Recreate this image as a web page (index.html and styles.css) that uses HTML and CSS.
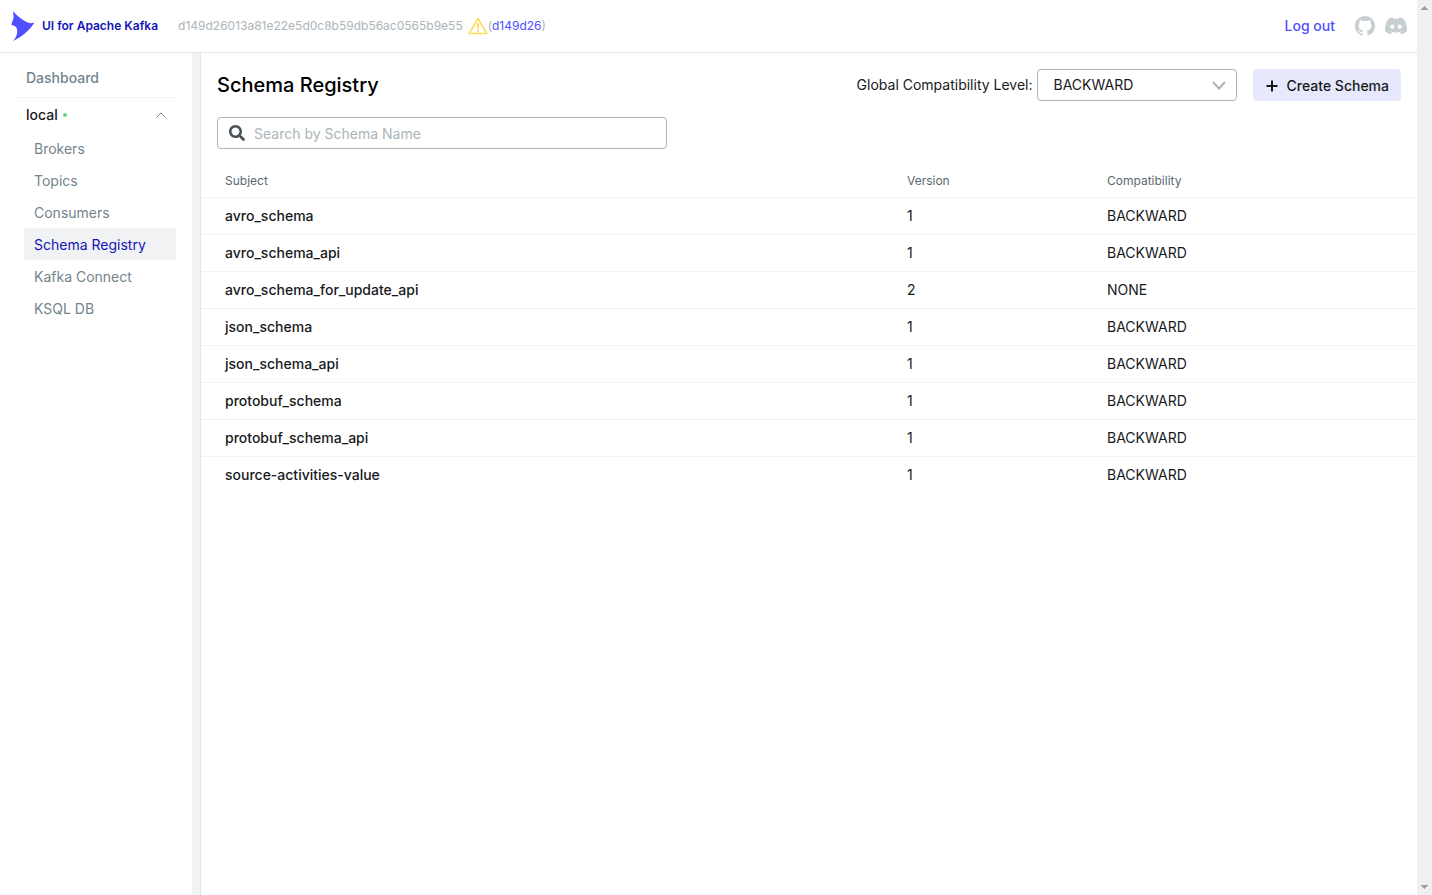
FILE: index.html
```html
<!DOCTYPE html>
<html lang="en">
<head>
<meta charset="utf-8">
<title>UI for Apache Kafka</title>
<link rel="stylesheet" href="styles.css">
</head>
<body>
<div class="page">
  <div class="app">
    <header class="navbar">
      <a class="brand" href="#">
        <svg class="brand-logo" viewBox="0 0 24 32" aria-hidden="true"><path d="M2 1C6 6 11 9.500 15.500 12Q19 14 23.500 12.500C19 20 11 27 2 31C5 28 7 23 6 19Q5 15.500 0.500 15C0.500 12 3 9.500 2.500 6Z"/></svg>
        <span>UI for Apache Kafka</span>
      </a>
      <div class="version">
        <span>d149d26013a81e22e5d0c8b59db56ac0565b9e55</span>
        <svg class="warning" viewBox="0 0 20 18" role="img" aria-label="Warning"><path d="M10 1.500L18.800 16.500H1.200Z"/><path class="warning-mark" d="M10 6v5.500M10 12.700v2"/></svg>
        <span>(<a href="#">d149d26</a>)</span>
      </div>
      <div class="nav-actions">
        <a class="logout" href="#">Log out</a>
        <a class="social" href="#" aria-label="GitHub"><svg width="20" height="20" viewBox="0 0 16 16"><path d="M8 0C3.580 0 0 3.580 0 8c0 3.540 2.290 6.530 5.470 7.590.4.070.55-.17.55-.38 0-.19-.01-.82-.01-1.490-2.010.37-2.530-.49-2.690-.94-.09-.23-.48-.94-.82-1.130-.28-.15-.68-.52-.01-.53.63-.01 1.080.58 1.230.82.72 1.210 1.870.87 2.330.66.070-.52.28-.87.51-1.070-1.780-.2-3.640-.89-3.640-3.950 0-.87.31-1.590.82-2.150-.08-.2-.36-1.020.08-2.120 0 0 .67-.21 2.200.82.640-.18 1.320-.27 2-.27.68 0 1.360.09 2 .27 1.530-1.040 2.200-.82 2.200-.82.44 1.100.16 1.920.08 2.120.51.56.82 1.270.82 2.150 0 3.070-1.870 3.750-3.650 3.950.29.25.54.73.54 1.480 0 1.070-.01 1.930-.01 2.200 0 .21.15.46.55.38A8.013 8.013 0 0016 8c0-4.420-3.580-8-8-8z"/></svg></a>
        <a class="social" href="#" aria-label="Discord"><svg width="22" height="22" viewBox="0 0 24 24"><path d="M20.317 4.370a19.791 19.791 0 00-4.885-1.515.074.074 0 00-.079.037c-.211.375-.445.865-.608 1.250a18.270 18.270 0 00-5.487 0 12.640 12.640 0 00-.617-1.250.077.077 0 00-.079-.037A19.736 19.736 0 003.677 4.370a.07.07 0 00-.032.028C.533 9.046-.319 13.580.099 18.058a.082.082 0 00.031.056 19.900 19.900 0 005.993 3.030.078.078 0 00.084-.028c.462-.63.874-1.295 1.226-1.994a.076.076 0 00-.042-.106 13.107 13.107 0 01-1.872-.892.077.077 0 01-.008-.128c.126-.094.252-.192.372-.291a.074.074 0 01.078-.011c3.928 1.793 8.180 1.793 12.061 0a.074.074 0 01.079.01c.12.099.246.198.373.292a.077.077 0 01-.007.128 12.299 12.299 0 01-1.873.891.077.077 0 00-.041.107c.36.698.772 1.363 1.225 1.993a.076.076 0 00.084.029 19.839 19.839 0 006.002-3.030.077.077 0 00.032-.055c.5-5.177-.838-9.674-3.549-13.660a.061.061 0 00-.031-.029zM8.020 15.331c-1.183 0-2.157-1.086-2.157-2.419s.955-2.419 2.157-2.419c1.210 0 2.176 1.095 2.157 2.419 0 1.333-.956 2.419-2.157 2.419zm7.975 0c-1.183 0-2.157-1.086-2.157-2.419s.955-2.419 2.157-2.419c1.210 0 2.176 1.095 2.157 2.419 0 1.333-.946 2.419-2.157 2.419z"/></svg></a>
      </div>
    </header>
    <div class="body">
      <nav class="sidebar" aria-label="Main">
        <a class="dashboard" href="#">Dashboard</a>
        <button class="cluster" type="button" aria-expanded="true">
          <span>local</span><span class="status"></span>
          <svg class="cluster-arrow" width="10" height="6" viewBox="0 0 10 6" aria-hidden="true"><path d="M0.500 5.500L5 1l4.500 4.500"/></svg>
        </button>
        <ul class="menu">
          <li><a href="#">Brokers</a></li>
          <li><a href="#">Topics</a></li>
          <li><a href="#">Consumers</a></li>
          <li><a class="active" href="#" aria-current="page">Schema Registry</a></li>
          <li><a href="#">Kafka Connect</a></li>
          <li><a href="#">KSQL DB</a></li>
        </ul>
      </nav>
      <main class="content">
        <div class="heading">
          <h1>Schema Registry</h1>
          <div class="controls">
            <label for="level">Global Compatibility Level:</label>
            <div class="select">
              <select id="level"><option>BACKWARD</option><option>NONE</option></select>
              <svg width="14" height="9" viewBox="0 0 14 9" aria-hidden="true"><path d="M1 1l6 6.500L13 1"/></svg>
            </div>
            <button class="create" type="button"><svg width="12" height="12" viewBox="0 0 12 12" aria-hidden="true"><path d="M6 0.500v11M0.500 6h11"/></svg>Create Schema</button>
          </div>
        </div>
        <div class="search">
          <svg width="16" height="16" viewBox="0 0 512 512" aria-hidden="true"><path d="M505 442.700L405.300 343c-4.500-4.500-10.600-7-17-7H372c27.600-35.300 44-79.700 44-128C416 93.100 322.900 0 208 0S0 93.100 0 208s93.100 208 208 208c48.300 0 92.700-16.400 128-44v16.300c0 6.400 2.500 12.500 7 17l99.700 99.700c9.400 9.400 24.600 9.400 33.900 0l28.300-28.300c9.400-9.400 9.400-24.600.1-34zM208 336c-70.700 0-128-57.200-128-128 0-70.700 57.200-128 128-128 70.700 0 128 57.200 128 128 0 70.700-57.200 128-128 128z"/></svg>
          <input type="text" placeholder="Search by Schema Name" aria-label="Search by Schema Name">
        </div>
        <table class="schemas">
          <thead><tr><th>Subject</th><th class="col-version">Version</th><th class="col-level">Compatibility</th></tr></thead>
          <tbody>
            <tr><td><a href="#">avro_schema</a></td><td>1</td><td>BACKWARD</td></tr>
            <tr><td><a href="#">avro_schema_api</a></td><td>1</td><td>BACKWARD</td></tr>
            <tr><td><a href="#">avro_schema_for_update_api</a></td><td>2</td><td>NONE</td></tr>
            <tr><td><a href="#">json_schema</a></td><td>1</td><td>BACKWARD</td></tr>
            <tr><td><a href="#">json_schema_api</a></td><td>1</td><td>BACKWARD</td></tr>
            <tr><td><a href="#">protobuf_schema</a></td><td>1</td><td>BACKWARD</td></tr>
            <tr><td><a href="#">protobuf_schema_api</a></td><td>1</td><td>BACKWARD</td></tr>
            <tr><td><a href="#">source-activities-value</a></td><td>1</td><td>BACKWARD</td></tr>
          </tbody>
        </table>
      </main>
    </div>
  </div>
  <div class="scrollbar" aria-hidden="true">
    <svg width="7" height="4" viewBox="0 0 7 4"><path d="M3 0h1v1h1v1h1v1h1v1H0V3h1V2h1V1h1z"/></svg>
    <svg width="7" height="4" viewBox="0 0 7 4"><path d="M0 0h7v1H6v1H5v1H4v1H3V3H2V2H1V1H0z"/></svg>
  </div>
</div>
</body>
</html>
```
FILE: styles.css
```css
* { box-sizing: border-box; }
body {
  margin: 0;
  font-family: Inter, "Liberation Sans", sans-serif;
  font-size: 14px;
  line-height: 20px;
  color: #171a1c;
  background: #fff;
}
a { color: inherit; text-decoration: none; }
button, input, select { font: inherit; color: inherit; }
svg { display: block; flex: none; }

.page { display: flex; min-height: 100vh; }
.app { flex: 1; display: flex; flex-direction: column; min-width: 0; }

.navbar {
  display: flex;
  align-items: center;
  height: 53px;
  padding: 0 10px 0 11px;
  border-bottom: 1px solid #e3e6e8;
}
.brand {
  display: flex;
  align-items: center;
  gap: 7px;
  font-size: 12px;
  font-weight: 600;
  color: #1414b8;
}
.brand-logo { width: 24px; height: 32px; fill: #4f4fff; }
.version {
  display: flex;
  align-items: center;
  margin-left: 20px;
  font-size: 12px;
  color: #abb5ba;
}
.version a { color: #4f4fff; }
.warning {
  width: 20px;
  height: 18px;
  margin-left: 5px;
  fill: none;
  stroke: #ffdd57;
  stroke-width: 1.500;
  stroke-linejoin: round;
}
.warning-mark { stroke-width: 2; }
.nav-actions { display: flex; align-items: center; gap: 10px; margin-left: auto; }
.logout { margin-right: 10px; font-weight: 500; color: #4f4fff; }
.social { fill: #c7ced1; }

.body { flex: 1; display: flex; }
.sidebar {
  width: 201px;
  padding: 8px 16px;
  border-right: 1px solid #e3e6e8;
  box-shadow: inset -8px 0 #f1f2f3;
}
.dashboard {
  display: block;
  width: 160px;
  padding: 7px 10px 9px;
  border-bottom: 1px solid #f1f2f3;
  font-weight: 500;
  color: #73848c;
}
.cluster {
  display: flex;
  align-items: center;
  width: 160px;
  height: 34px;
  padding: 0 10px;
  border: 0;
  background: none;
  font-weight: 500;
}
.status { width: 4px; height: 4px; margin-left: 5px; border-radius: 50%; background: #5cd685; }
.cluster-arrow { margin-left: auto; fill: none; stroke: #73848c; }
.menu { width: 152px; margin: 0 0 0 8px; padding: 0; list-style: none; }
.menu a { display: block; padding: 7px 10px 5px; color: #73848c; }
.menu .active { background: #f1f2f3; color: #1414b8; }

.content { flex: 1; min-width: 0; }
.heading {
  display: flex;
  align-items: center;
  justify-content: space-between;
  padding: 16px;
}
h1 { margin: 0; font-size: 20px; line-height: 32px; font-weight: 500; color: #000; }
.controls { display: flex; align-items: center; }
.select { position: relative; width: 200px; margin: 0 16px 0 4px; }
.select select {
  display: block;
  width: 100%;
  height: 32px;
  padding: 0 16px;
  border: 1px solid #abb5ba;
  border-radius: 4px;
  background: #fff;
  appearance: none;
}
.select svg {
  position: absolute;
  top: 12px;
  right: 11px;
  fill: none;
  stroke: #abb5ba;
  stroke-width: 2;
  pointer-events: none;
}
.create {
  display: flex;
  align-items: center;
  gap: 9px;
  height: 32px;
  padding: 1px 12px 0 13px;
  border: 0;
  border-radius: 4px;
  background: #e8e8fc;
  font-weight: 500;
}
.create svg { fill: none; stroke: #171a1c; stroke-width: 2; }
.search {
  display: flex;
  align-items: center;
  gap: 9px;
  width: 450px;
  height: 32px;
  margin: 0 16px 16px;
  padding: 0 11px;
  border: 1px solid #abb5ba;
  border-radius: 4px;
}
.search svg { fill: #454f54; }
.search input { flex: 1; min-width: 0; padding: 2px 0 0; border: 0; outline: 0; background: none; }
.search input::placeholder { color: #abb5ba; opacity: 1; }

.schemas { width: 100%; table-layout: fixed; border-collapse: collapse; }
.schemas th, .schemas td {
  height: 37px;
  padding: 0 24px;
  text-align: left;
}
.schemas th {
  height: 32px;
  border-bottom: 1px solid #f1f2f3;
  font-size: 12px;
  font-weight: 400;
  color: #5c6970;
}
.schemas td { border-bottom: 1px solid #f1f2f3; }
.schemas tr:last-child td { border-bottom: 0; }
.schemas td a { font-weight: 500; }
.col-version { width: 200px; }
.col-level { width: 334px; }

.scrollbar {
  display: flex;
  flex-direction: column;
  justify-content: space-between;
  align-items: center;
  width: 15px;
  padding: 6px 0;
  background: #f0f0f0;
  fill: #a0a0a0;
}
```
